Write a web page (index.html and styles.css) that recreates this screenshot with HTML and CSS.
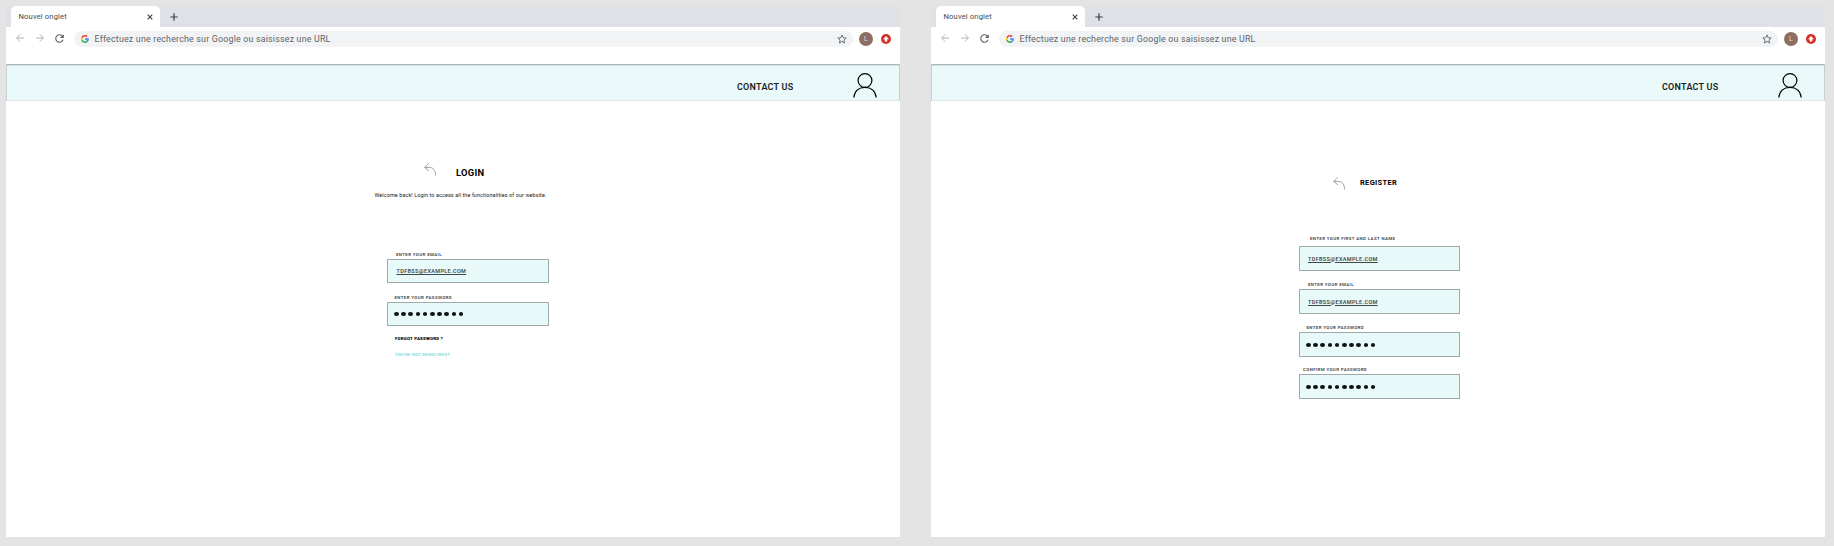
FILE: index.html
```html
<!DOCTYPE html>
<html lang="fr">
<head>
<meta charset="utf-8">
<title>Login / Register</title>
<link rel="stylesheet" href="styles.css">
</head>
<body>
<svg width="0" height="0" class="defs">
  <symbol id="close" viewBox="0 0 6 6"><path d="M.7.7l4.6 4.6M5.3.7L.7 5.3" fill="none" stroke="#3c4043" stroke-width="1.1"/></symbol>
  <symbol id="plus" viewBox="0 0 8 8"><path d="M4 .3v7.4M.3 4h7.4" fill="none" stroke="#3c4043" stroke-width="1.2"/></symbol>
  <symbol id="left" viewBox="0 0 8 8"><path d="M8 4H.7M4.2.4L.6 4l3.6 3.6" fill="none" stroke="#b0b2b4" stroke-width="1"/></symbol>
  <symbol id="right" viewBox="0 0 8 8"><path d="M0 4h7.3M3.8.4L7.4 4 3.8 7.6" fill="none" stroke="#b0b2b4" stroke-width="1"/></symbol>
  <symbol id="reload" viewBox="0 0 9 9"><path d="M7.5 2.4A3.7 3.7 0 1 0 8 5.6" fill="none" stroke="#5f6368" stroke-width="1.1"/><path d="M8.8.2v3.9H4.9z" fill="#5f6368"/></symbol>
  <symbol id="google" viewBox="0 0 48 48"><path fill="#ea4335" d="M24 9.5c3.5 0 6.700 1.200 9.200 3.600l6.900-6.900C35.900 2.400 30.500 0 24 0 14.600 0 6.500 5.400 2.600 13.200l8 6.200C12.400 13.700 17.700 9.500 24 9.500z"/><path fill="#4285f4" d="M47 24.600c0-1.600-.2-3.100-.4-4.600H24v9h12.900c-.6 3-2.200 5.500-4.700 7.200l7.700 6C44.400 38 47 31.800 47 24.600z"/><path fill="#fbbc05" d="M10.500 28.600a14.500 14.500 0 0 1 0-9.200l-8-6.200a24 24 0 0 0 0 21.600z"/><path fill="#34a853" d="M24 48c6.500 0 11.900-2.100 15.900-5.800l-7.700-6c-2.200 1.500-4.900 2.300-8.200 2.300-6.300 0-11.600-4.200-13.500-9.900l-8 6.200C6.500 42.600 14.600 48 24 48z"/></symbol>
  <symbol id="star" viewBox="0 0 10 10"><path d="M5 .9l1.200 2.800 3 .3-2.300 2 .7 3L5 7.400 2.400 9l.7-3L.8 4l3-.3z" fill="none" stroke="#5f6368" stroke-width=".9"/></symbol>
  <symbol id="update" viewBox="0 0 10 10"><circle cx="5" cy="5" r="5" fill="#d93025"/><path d="M5 2.100L8 5.200H6.200v2.300H3.800V5.200H2z" fill="#fff"/></symbol>
  <symbol id="user" viewBox="0 0 24 26"><circle cx="12" cy="8.500" r="6.900" fill="none" stroke="#000" stroke-width="1.200"/><path d="M.8 25.500C1.500 19 6 15.400 12 15.400S22.500 19 23.200 25.500" fill="none" stroke="#000" stroke-width="1.200"/></symbol>
  <symbol id="back" viewBox="0 0 12 13"><path d="M4.600.5L.7 4.400l4.200 3.400M.8 4.400H5c4.300 0 6.500 2.600 6.500 8" fill="none" stroke="#777" stroke-width=".7"/></symbol>
</svg>
<main class="board">
  <section class="window">
    <div class="tabs">
      <div class="tab"><span class="tab-title">Nouvel onglet</span><svg class="close"><use href="#close"/></svg></div>
      <svg class="plus"><use href="#plus"/></svg>
    </div>
    <div class="toolbar">
      <svg class="nav"><use href="#left"/></svg><svg class="nav"><use href="#right"/></svg><svg class="reload"><use href="#reload"/></svg>
      <div class="omnibox"><svg class="google"><use href="#google"/></svg><span class="query">Effectuez une recherche sur Google ou saisissez une URL</span><svg class="star"><use href="#star"/></svg></div>
      <span class="avatar">L</span><svg class="update"><use href="#update"/></svg>
    </div>
    <header class="banner"><span class="contact">CONTACT US</span><svg class="user"><use href="#user"/></svg></header>
    <div class="login">
      <div class="heading"><svg class="back"><use href="#back"/></svg><h1 class="title title-login">LOGIN</h1></div>
      <p class="welcome">Welcome back! Login to access all the functionalities of our website.</p>
      <form class="form">
        <label class="label label-email">ENTER YOUR EMAIL</label>
        <div class="field"><span class="value">TDFBSS@EXAMPLE.COM</span></div>
        <label class="label label-password">ENTER YOUR PASSWORD</label>
        <div class="field"><span class="dots"><i></i><i></i><i></i><i></i><i></i><i></i><i></i><i></i><i></i><i></i></span></div>
        <a class="forgot">FORGOT PASSWORD ?</a>
        <a class="signup">YOU'RE NOT REGISTRED?</a>
      </form>
    </div>
  </section>
  <section class="window">
    <div class="tabs">
      <div class="tab"><span class="tab-title">Nouvel onglet</span><svg class="close"><use href="#close"/></svg></div>
      <svg class="plus"><use href="#plus"/></svg>
    </div>
    <div class="toolbar">
      <svg class="nav"><use href="#left"/></svg><svg class="nav"><use href="#right"/></svg><svg class="reload"><use href="#reload"/></svg>
      <div class="omnibox"><svg class="google"><use href="#google"/></svg><span class="query">Effectuez une recherche sur Google ou saisissez une URL</span><svg class="star"><use href="#star"/></svg></div>
      <span class="avatar">L</span><svg class="update"><use href="#update"/></svg>
    </div>
    <header class="banner"><span class="contact">CONTACT US</span><svg class="user"><use href="#user"/></svg></header>
    <div class="register">
      <div class="heading"><svg class="back"><use href="#back"/></svg><h1 class="title title-register">REGISTER</h1></div>
      <form class="form">
        <label class="label label-name">ENTER YOUR FIRST AND LAST NAME</label>
        <div class="field"><span class="value">TDFBSS@EXAMPLE.COM</span></div>
        <label class="label label-email">ENTER YOUR EMAIL</label>
        <div class="field"><span class="value">TDFBSS@EXAMPLE.COM</span></div>
        <label class="label label-password">ENTER YOUR PASSWORD</label>
        <div class="field field-tight"><span class="dots"><i></i><i></i><i></i><i></i><i></i><i></i><i></i><i></i><i></i><i></i></span></div>
        <label class="label label-confirm">CONFIRM YOUR PASSWORD</label>
        <div class="field"><span class="dots"><i></i><i></i><i></i><i></i><i></i><i></i><i></i><i></i><i></i><i></i></span></div>
      </form>
    </div>
  </section>
</main>
</body>
</html>
```
FILE: styles.css
```css
* { box-sizing: border-box; }
body { margin: 0; background: #e4e4e4; font-family: Roboto, sans-serif; white-space: nowrap; overflow: hidden; }
svg { display: block; flex: none; }
.defs { display: none; }
.board { display: flex; gap: 31px; height: 546px; padding: 6px 9px 9px 6px; }
.window { width: 894px; height: 531px; background: #fff; }

.tabs { display: flex; height: 21px; padding-left: 5px; background: #dee1e6; }
.tab { display: flex; align-items: center; width: 149px; padding: 0 7px 0 7.5px; background: #fff; border-radius: 5px 5px 0 0; }
.tab-title { flex: 1; color: #45494d; font-size: 7.6px; letter-spacing: 0.15px; }
.close { width: 6px; height: 6px; }
.plus { width: 8px; height: 8px; margin: 6.5px 0 0 9.5px; }

.toolbar { display: flex; align-items: center; height: 37px; padding: 0 9px 15px 10px; }
.nav { width: 8px; height: 8px; margin-right: 12px; }
.reload { width: 9px; height: 9px; margin: 0 9px 0 -1px; }
.omnibox { display: flex; align-items: center; width: 780px; height: 16px; margin: 2px 6px 0 1px; padding: 0 6.5px 1px 6.5px; background: #f1f3f4; border-radius: 8px; }
.google { width: 8px; height: 8px; margin-right: 6px; }
.query { flex: 1; color: #606367; font-size: 8.8px; letter-spacing: 0.22px; }
.star { width: 10px; height: 10px; }
.avatar { width: 14px; height: 14px; margin: 1px 8px 0 0; border-radius: 50%; background: #8d6e63; color: #e4dcd9; font-size: 7px; line-height: 14px; text-align: center; }
.update { width: 10px; height: 10px; margin-top: 1px; }

.banner { display: flex; align-items: flex-start; height: 37px; padding-left: 730px; background: #eaf9f9; border: 1px solid #c4cfcf; border-top-color: #aab6b7; border-bottom-color: #dfe6e6; box-shadow: inset 0 1px #d3dfdf; }
.contact { width: 116px; padding-top: 15px; color: #1b1f1f; font-size: 9px; font-weight: 600; line-height: 14px; letter-spacing: 0.24px; }
.user { width: 24px; height: 26px; margin-top: 7px; }

.login { padding: 62px 0 0 368.5px; }
.register { padding: 76px 0 0 368px; }
.heading { display: flex; height: 13px; }
.login .heading { padding-left: 49px; }
.register .heading { padding-left: 34px; }
.back { width: 12px; height: 13px; }
.title { margin: 0; color: #000; font-weight: 700; }
.title-login { padding: 3px 0 0 20.5px; font-size: 9.4px; line-height: 13px; letter-spacing: 0.28px; }
.title-register { padding: 0 0 0 15px; font-size: 7.5px; line-height: 12px; letter-spacing: 0.32px; }
.welcome { margin: 14px 0 0; color: #222; font-size: 5.5px; line-height: 10px; letter-spacing: 0.07px; }

.form { display: flex; flex-direction: column; width: 161px; }
.login .form { width: 162px; margin: 49px 0 0 12.5px; }
.register .form { margin-top: 43px; }
.label { height: 10px; color: #444; font-size: 4.4px; font-weight: 600; line-height: 12px; letter-spacing: 0.38px; }
.login .label { line-height: 11px; }
.field { display: flex; align-items: center; height: 25px; margin-bottom: 8px; background: #e8f9f9; border: 1px solid #9eaaaa; }
.field-tight { margin-bottom: 7px; }
.login .field { height: 24px; margin-bottom: 9px; }
.value { padding-left: 8px; color: #414848; font-size: 5.5px; font-weight: 600; letter-spacing: 0.34px; text-decoration: underline; text-decoration-thickness: 0.5px; text-underline-offset: 0.5px; }
.login .value { padding-left: 8.5px; }
.dots { display: flex; gap: 2.6px; padding-left: 6px; }
.dots i { width: 4.6px; height: 4px; border-radius: 50%; background: #101414; }
.label-email { padding-left: 9px; }
.label-password { padding-left: 7.5px; }
.label-name { padding-left: 11px; margin-bottom: 3px; }
.label-confirm { padding-left: 4px; }
.forgot, .signup { padding-left: 8px; font-size: 4.3px; line-height: 10px; letter-spacing: 0.2px; }
.forgot { margin-top: -1.5px; color: #000; font-weight: 900; letter-spacing: 0.25px; }
.signup { margin-top: 6px; color: #62d3d6; font-weight: 500; letter-spacing: 0.25px; }
```
